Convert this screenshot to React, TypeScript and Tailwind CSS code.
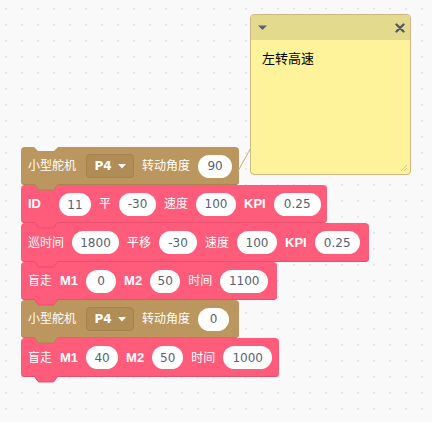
import React from "react";

const cjk = "font-['DejaVu_Sans','Noto_Sans_CJK_SC',sans-serif]";

type Kind = "tan" | "red";

const Pill = ({ v, w }: { v: string; w: string }) => (
  <span className={`inline-flex h-[23px] ${w} items-center justify-center rounded-full bg-white text-[12px] text-[#575e75]`}>
    {v}
  </span>
);

const Label = ({ t, b }: { t: string; b?: boolean }) => (
  <span
    className={`text-[12px] text-white whitespace-nowrap ${
      b ? "font-bold font-['Liberation_Sans','Noto_Sans_CJK_SC',sans-serif] text-[13px]" : ""
    }`}
  >
    {t}
  </span>
);

const Dropdown = ({ v }: { v: string }) => (
  <span className="ml-[2px] inline-flex h-[24px] w-[48px] items-center justify-center gap-[6px] rounded-[4px] border border-[#a5834f] bg-[#b08c56] text-[12px] font-semibold text-white">
    {v}
    <svg width="8" height="5" viewBox="0 0 8 5">
      <path d="M0 0 L8 0 L4 4.5 Z" fill="#fff" />
    </svg>
  </span>
);

const Tab = ({ kind }: { kind: Kind }) => (
  <svg className="absolute left-[13px] top-full -mt-[1px] z-10" width="24" height="7" viewBox="0 0 24 7">
    <path d="M0 0 L4 5.5 Q4.5 6 5.5 6 L18.5 6 Q19.5 6 20 5.5 L24 0 Z" fill={kind === "tan" ? "#bb965e" : "#ff5b7a"} />
    <path d="M0.5 0.5 L4 5.5 Q4.5 6 5.5 6 L18.5 6 Q19.5 6 20 5.5 L23.5 0.5" fill="none" stroke={kind === "tan" ? "#a8864f" : "#e6506c"} strokeWidth="1" />
  </svg>
);

const Block = ({ kind, className, children, top }: { kind: Kind; className: string; children: React.ReactNode; top?: boolean }) => (
  <div
    className={`relative flex items-center gap-2 pl-[7px] pr-[6px] rounded-[4px] ${
      kind === "tan" ? "bg-[#bb965e] shadow-[inset_0_-1px_0_#a8864f]" : "bg-[#ff5b7a] shadow-[inset_0_-1px_0_#e6506c]"
    } ${className}`}
  >
    {top && (
      <svg className="absolute left-[13px] top-0" width="24" height="5" viewBox="0 0 24 5">
        <path d="M0 0 L4 4 L20 4 L24 0 Z" fill="#f9f9f9" />
      </svg>
    )}
    {children}
    <Tab kind={kind} />
  </div>
);

export default function App() {
  return (
    <div
      className={`relative h-[422px] w-[432px] overflow-hidden bg-[#f9f9f9] bg-[radial-gradient(circle,#e8e8e8_0.7px,transparent_1px)] bg-[size:16px_16px] bg-[position:-2px_1px] ${cjk}`}
    >
      <div className="flex flex-col items-start pl-[21px] pt-[147px]">
        <Block kind="tan" top className="h-[38px] w-[218px]">
          <Label t="小型舵机" />
          <Dropdown v="P4" />
          <Label t="转动角度" />
          <Pill v="90" w="w-[34px]" />
        </Block>
        <Block kind="red" className="h-[38px] w-[306px]">
          <Label t="ID" b />
          <span className="ml-[10px]">
            <Pill v="11" w="w-[32px]" />
          </span>
          <Label t="平" />
          <Pill v="-30" w="w-[37px]" />
          <Label t="速度" />
          <Pill v="100" w="w-[40px]" />
          <Label t="KPI" b />
          <Pill v="0.25" w="w-[47px]" />
        </Block>
        <Block kind="red" className="h-[39px] w-[348px]">
          <Label t="巡时间" />
          <Pill v="1800" w="w-[47px]" />
          <Label t="平移" />
          <Pill v="-30" w="w-[38px]" />
          <Label t="速度" />
          <Pill v="100" w="w-[40px]" />
          <Label t="KPI" b />
          <Pill v="0.25" w="w-[45px]" />
        </Block>
        <Block kind="red" className="h-[38px] w-[256px]">
          <Label t="盲走" />
          <Label t="M1" b />
          <Pill v="0" w="w-[30px]" />
          <Label t="M2" b />
          <Pill v="50" w="w-[30px]" />
          <Label t="时间" />
          <Pill v="1100" w="w-[48px]" />
        </Block>
        <Block kind="tan" className="h-[38px] w-[218px]">
          <Label t="小型舵机" />
          <Dropdown v="P4" />
          <Label t="转动角度" />
          <Pill v="0" w="w-[31px]" />
        </Block>
        <Block kind="red" className="h-[39px] w-[258px]">
          <Label t="盲走" />
          <Label t="M1" b />
          <Pill v="40" w="w-[32px]" />
          <Label t="M2" b />
          <Pill v="50" w="w-[31px]" />
          <Label t="时间" />
          <Pill v="1000" w="w-[49px]" />
        </Block>
      </div>

      <svg className="absolute left-[236px] top-[146px]" width="16" height="28" viewBox="0 0 16 28">
        <path d="M1.5 26 L15 1.5" stroke="#c9ad78" strokeWidth="1" fill="none" />
      </svg>

      <div className="absolute left-[250px] top-[14px] flex h-[161px] w-[161px] flex-col overflow-hidden rounded-[4px] border border-[#cdb883] bg-[#fef39a]">
        <div className="flex h-[25px] items-center justify-between bg-[#e3da8e] pl-[7px] pr-[5px]">
          <svg width="9" height="6" viewBox="0 0 9 6">
            <path d="M0 0.5 L9 0.5 L4.5 5 Z" fill="#5b6074" />
          </svg>
          <svg width="10" height="10" viewBox="0 0 10 10">
            <path d="M1.5 1.5 L8.5 8.5 M8.5 1.5 L1.5 8.5" stroke="#55596c" strokeWidth="2.4" strokeLinecap="round" />
          </svg>
        </div>
        <div className="relative flex-1 px-[11px] pt-[6px]">
          <span className="text-[13px] text-black font-['Noto_Sans_CJK_SC',sans-serif]">左转高速</span>
          <svg className="absolute bottom-[2px] right-[2px]" width="10" height="10" viewBox="0 0 10 10">
            <path d="M9 3 L3 9 M9 6 L6 9" stroke="#d6c58a" strokeWidth="1" />
          </svg>
        </div>
      </div>
    </div>
  );
}
